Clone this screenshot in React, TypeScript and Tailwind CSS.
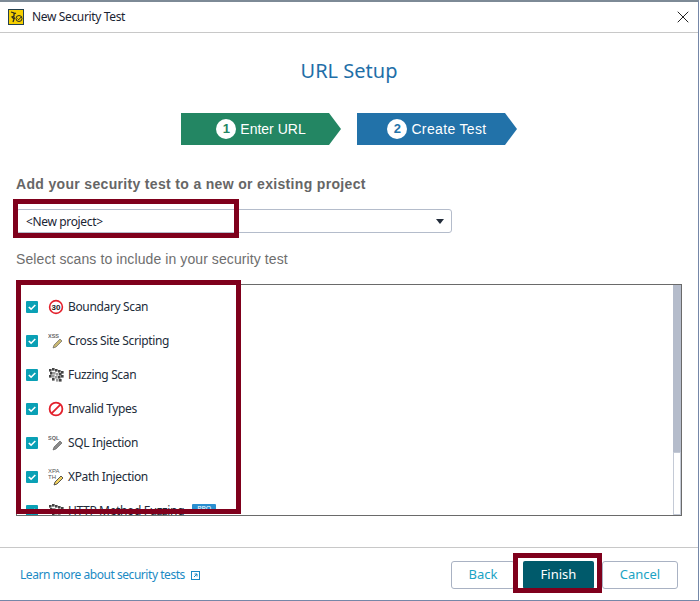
import { X } from 'lucide-react'
import type { ReactNode } from 'react'

const UI_FONT = "font-['Noto_Sans',sans-serif]"
const ARIAL = "font-['Liberation_Sans',Arial,sans-serif]"

function AppIcon() {
  return (
    <svg width="16" height="16" viewBox="0 0 16 16" className="shrink-0">
      <rect x="0.5" y="0.5" width="15" height="15" fill="#f5cf00" stroke="#24404f" />
      <path d="M3 3l3 1 0 3-2 1 2 2-1 3M6 5l2-1M5 9l2 0" fill="none" stroke="#2b2b20" strokeWidth="1.3" />
      <circle cx="11" cy="9.5" r="3" fill="none" stroke="#2b2b20" />
      <path d="M9.5 9.5l1.2 1.2 2.8-3" fill="none" stroke="#2b2b20" />
    </svg>
  )
}

function Step({ n, label, color }: { n: number; label: string; color: string }) {
  return (
    <div className={`w-[160px] h-8 flex items-center justify-center gap-1 text-white ${color} [clip-path:polygon(0_0,148px_0,100%_50%,148px_100%,0_100%)]`}>
      <span className={`w-5 h-5 rounded-full bg-white flex items-center justify-center text-[13px] font-bold ${n === 1 ? 'text-[#238663]' : 'text-[#2272a9]'}`}>{n}</span>
      <span className={`text-sm ${n === 1 ? '' : 'tracking-[0.35px]'}`}>{label}</span>
    </div>
  )
}

function Speed() {
  return (
    <svg width="16" height="16" viewBox="0 0 16 16">
      <circle cx="8" cy="8" r="6.4" fill="#fff" stroke="#e3202c" strokeWidth="1.6" />
      <text x="8" y="10.8" textAnchor="middle" fontSize="8" fontWeight="700" fontFamily="Liberation Sans" fill="#222">30</text>
    </svg>
  )
}

function Pencil({ tag, fill = '#8a8a8a' }: { tag: string; fill?: string }) {
  return (
    <svg width="16" height="16" viewBox="0 0 16 16">
      <text x="0" y="5" fontSize="5.5" fontWeight="700" fontFamily="Liberation Sans" fill="#666">{tag}</text>
      <path d="M5 15l1-3 6-6 2 2-6 6z" fill={fill} stroke="#555" strokeWidth="0.6" />
    </svg>
  )
}

function XPathIcon() {
  return (
    <svg width="16" height="18" viewBox="0 0 16 18">
      <text x="0" y="5" fontSize="6" fontFamily="Liberation Sans" fill="#555">XPA</text>
      <text x="0" y="11" fontSize="6" fontFamily="Liberation Sans" fill="#555">TH</text>
      <path d="M6 17l1-3 6-6 2 2-6 6z" fill="#f0d060" stroke="#333" strokeWidth="0.8" />
    </svg>
  )
}

function Fuzz() {
  const cells = [[1, 2], [4, 1], [7, 2], [10, 3], [13, 4], [2, 5], [5, 5], [8, 6], [11, 6], [1, 8], [4, 8], [7, 9], [10, 9], [13, 8], [4, 11], [8, 12], [11, 12]]
  return (
    <svg width="16" height="16" viewBox="0 0 16 16">
      {cells.map(([x, y]) => (
        <rect key={`${x}-${y}`} x={x} y={y} width="2.6" height="2.6" fill={(x + y) % 2 ? '#444' : '#999'} />
      ))}
    </svg>
  )
}

function Forbidden() {
  return (
    <svg width="16" height="16" viewBox="0 0 16 16">
      <circle cx="8" cy="8" r="6.4" fill="none" stroke="#e3202c" strokeWidth="1.8" />
      <path d="M3.6 12.4l8.8-8.8" stroke="#e3202c" strokeWidth="1.8" />
    </svg>
  )
}

const SCANS: { label: string; icon: ReactNode; pro?: boolean }[] = [
  { label: 'Boundary Scan', icon: <Speed /> },
  { label: 'Cross Site Scripting', icon: <Pencil tag="XSS" fill="#c9b873" /> },
  { label: 'Fuzzing Scan', icon: <Fuzz /> },
  { label: 'Invalid Types', icon: <Forbidden /> },
  { label: 'SQL Injection', icon: <Pencil tag="SQL" /> },
  { label: 'XPath Injection', icon: <XPathIcon /> },
  { label: 'HTTP Method Fuzzing', icon: <Fuzz />, pro: true },
]

function ScanRow({ label, icon, pro }: { label: string; icon: ReactNode; pro?: boolean }) {
  return (
    <div className="h-[34px] shrink-0 flex items-center">
      <span className="w-3 h-3 -mt-px rounded-[1px] bg-[#0aa0b5] flex items-center justify-center">
        <svg width="10" height="10" viewBox="0 0 10 10">
          <path d="M1.8 5l2.3 2.2 4.2-4.2" fill="none" stroke="#fff" strokeWidth="1.6" />
        </svg>
      </span>
      <span className="w-4 h-4 ml-[10px] flex items-center justify-center">{icon}</span>
      <span className="ml-1 text-[12px] tracking-[-0.35px] text-[#222c3a]">{label}</span>
      {pro && <span className="ml-2 h-2.5 w-6 -mt-1 rounded-[1px] bg-[#2a8fd0] text-white text-[7px] leading-[10px] text-center">PRO</span>}
    </div>
  )
}

export default function App() {
  return (
    <div className={`relative w-[699px] h-[601px] flex flex-col bg-white border-t-2 border-r border-b border-t-[#7d8a96] border-r-[#7587a8] border-b-[#7587a8] overflow-hidden ${UI_FONT}`}>
      <div className="h-[31px] shrink-0 flex items-center pl-2 pr-[5px] border-b border-[#c8c8c8]">
        <AppIcon />
        <span className="ml-2 text-[12px] tracking-[-0.35px] text-[#1a2433]">New Security Test</span>
        <X className="ml-auto w-5 h-5 text-[#222]" strokeWidth={1.2} />
      </div>

      <h1 className="mt-6 h-7 text-center text-[20px] leading-7 text-[#1f6fa8]">URL Setup</h1>

      <div className={`mt-7 flex justify-center gap-4 ${ARIAL}`}>
        <Step n={1} label="Enter URL" color="bg-[#238663]" />
        <Step n={2} label="Create Test" color="bg-[#2272a9]" />
      </div>

      <p className={`mt-[30px] ml-4 text-sm leading-[18px] font-bold tracking-[0.33px] text-[#666] ${ARIAL}`}>Add your security test to a new or existing project</p>

      <div className="mt-[16px] ml-4 w-[436px] h-6 flex items-center justify-between pl-[9px] pr-[7px] border border-[#b4bccb] rounded-[3px]">
        <span className="pt-px text-[12px] tracking-[-0.35px] text-[#1a2433]">&lt;New project&gt;</span>
        <span className="w-0 h-0 border-x-4 border-t-[5px] border-x-transparent border-t-[#222c3a]" />
      </div>

      <p className={`mt-[17px] ml-4 text-sm leading-[18px] tracking-[0.09px] text-[#6e6e6e] ${ARIAL}`}>Select scans to include in your security test</p>

      <div className="mt-[16px] ml-4 w-[666px] h-[232px] flex border border-[#6a6a6a] overflow-hidden">
        <div className="flex-1 flex flex-col pl-[9px] pt-[5px]">
          {SCANS.map(s => <ScanRow key={s.label} {...s} />)}
        </div>
        <div className="w-2 h-full flex flex-col">
          <div className="h-[167px] bg-[#b5bccb]" />
          <div className="flex-1 border border-[#c4cad6] bg-white" />
        </div>
      </div>

      <div className="mt-[31px] flex-1 flex items-center justify-between pl-5 pr-5 pt-[2px] border-t border-[#c8c8c8]">
        <a className="flex items-center gap-[6px] text-[12px] tracking-[-0.45px] text-[#1b8ac4]">
          Learn more about security tests
          <svg width="9" height="9" viewBox="0 0 9 9">
            <rect x="0.5" y="0.5" width="8" height="8" fill="none" stroke="#1b8ac4" />
            <path d="M3 6l3-3M3.5 3H6v2.5" fill="none" stroke="#1b8ac4" />
          </svg>
        </a>
        <div className="flex items-center">
          <button className="w-[64px] h-7 rounded-[3px] border border-[#a9b2c3] bg-white text-[13px] text-[#1aa3c4]">Back</button>
          <button className="w-[71px] h-7 ml-2 rounded-[2px] bg-[#005a6b] text-[13px] text-white">Finish</button>
          <button className="w-[76px] h-7 ml-2 rounded-[3px] border border-[#a9b2c3] bg-white text-[13px] text-[#1aa3c4]">Cancel</button>
        </div>
      </div>

      {/* annotation boxes drawn over the dialog */}
      <div className="absolute left-[13px] top-[197px] w-[226px] h-[39px] border-[5px] border-[#7f001c]" />
      <div className="absolute left-4 top-[278px] w-[225px] h-[234px] border-[5px] border-[#7f001c]" />
      <div className="absolute left-[513px] top-[551px] w-[89px] h-10 border-[5px] border-[#7f001c]" />
    </div>
  )
}
